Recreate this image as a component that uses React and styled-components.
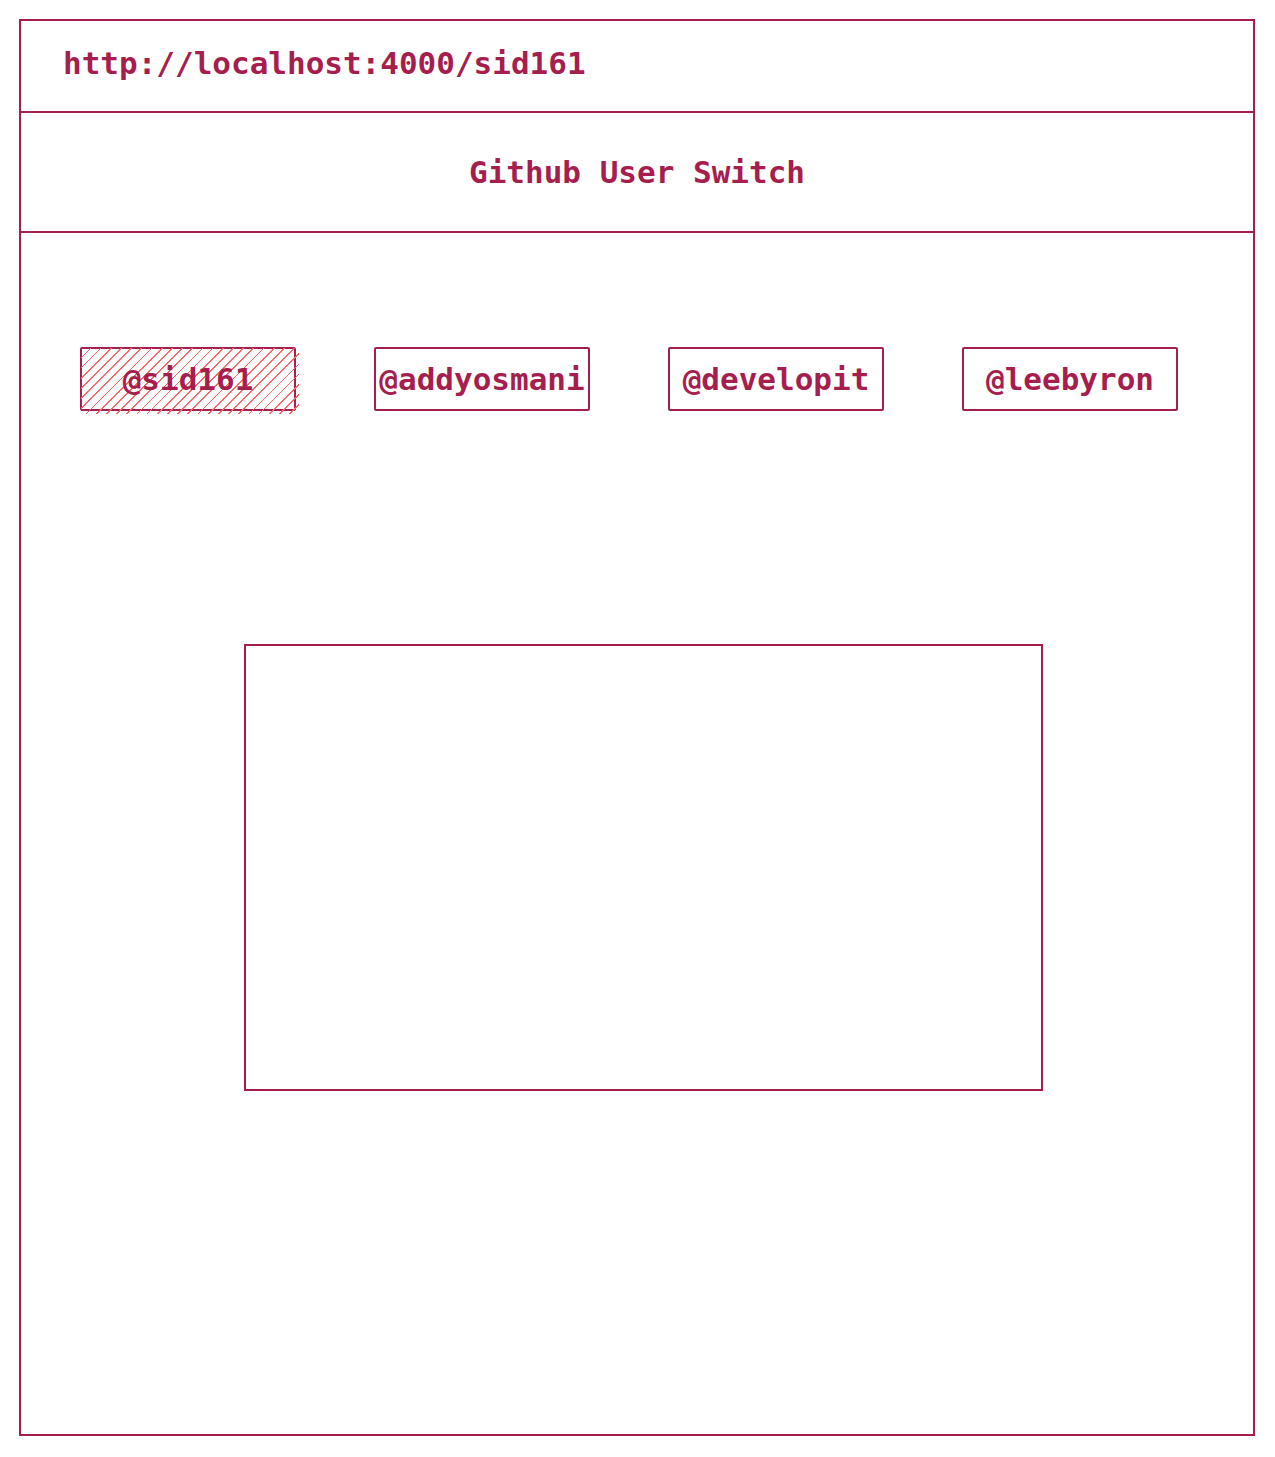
import React from 'react';
import styled, { createGlobalStyle } from 'styled-components';

const INK = '#a61e4d';
const HATCH = '#f46a6a';

const GlobalStyles = createGlobalStyle`
    html, body {
        margin: 0;
        padding: 0;
        background: #fff;
    }
    body {
        font-family: "DejaVu Sans Mono", "Liberation Mono", monospace;
        color: ${INK};
    }
`;

const Page = styled.div`
    padding: 19px 0 0 19px;
    width: 1275px;
    height: 1457px;
    box-sizing: border-box;
`;

const Frame = styled.section`
    width: 1236px;
    height: 1417px;
    box-sizing: border-box;
    border: 2px solid ${INK};
    display: flex;
    flex-direction: column;
`;

const UrlBar = styled.div`
    height: 92px;
    box-sizing: border-box;
    border-bottom: 2px solid ${INK};
    display: flex;
    align-items: center;
    padding: 0 0 6px 42px;
    font-size: 31px;
    font-weight: bold;
`;

const Header = styled.header`
    height: 120px;
    box-sizing: border-box;
    border-bottom: 2px solid ${INK};
    display: flex;
    align-items: center;
    justify-content: center;
    font-size: 31px;
    font-weight: bold;
`;

const UserList = styled.nav`
    display: flex;
    gap: 78px;
    padding: 114px 0 0 59px;
`;

const UserButton = styled.button`
    position: relative;
    width: 216px;
    height: 64px;
    box-sizing: border-box;
    border: 2px solid ${INK};
    border-radius: 2px;
    background: ${({ $active }) => ($active ? 'transparent' : '#fff')};
    color: ${INK};
    font-family: inherit;
    font-size: 31px;
    font-weight: bold;
    padding: 0;
    display: flex;
    align-items: center;
    justify-content: center;
    white-space: nowrap;
    overflow: visible;

    &::before {
        content: '';
        display: ${({ $active }) => ($active ? 'block' : 'none')};
        position: absolute;
        top: -1px;
        left: -1px;
        right: -5px;
        bottom: -5px;
        z-index: 0;
        pointer-events: none;
        background: repeating-linear-gradient(
            -45deg,
            transparent 0,
            transparent 6px,
            ${HATCH} 6px,
            ${HATCH} 7.2px
        );
    }
`;

const Label = styled.span`
    position: relative;
    z-index: 1;
`;

const ContentBox = styled.div`
    margin: 233px 0 0 223px;
    width: 799px;
    height: 447px;
    box-sizing: border-box;
    border: 2px solid ${INK};
`;

const users = ['sid161', 'addyosmani', 'developit', 'leebyron'];

const App = () => (
    <Page>
        <GlobalStyles />
        <Frame>
            <UrlBar>http://localhost:4000/sid161</UrlBar>
            <Header>Github User Switch</Header>
            <UserList>
                {users.map((u, i) => (
                    <UserButton key={u} $active={i === 0}>
                        <Label>@{u}</Label>
                    </UserButton>
                ))}
            </UserList>
            <ContentBox />
        </Frame>
    </Page>
);

export default App;
